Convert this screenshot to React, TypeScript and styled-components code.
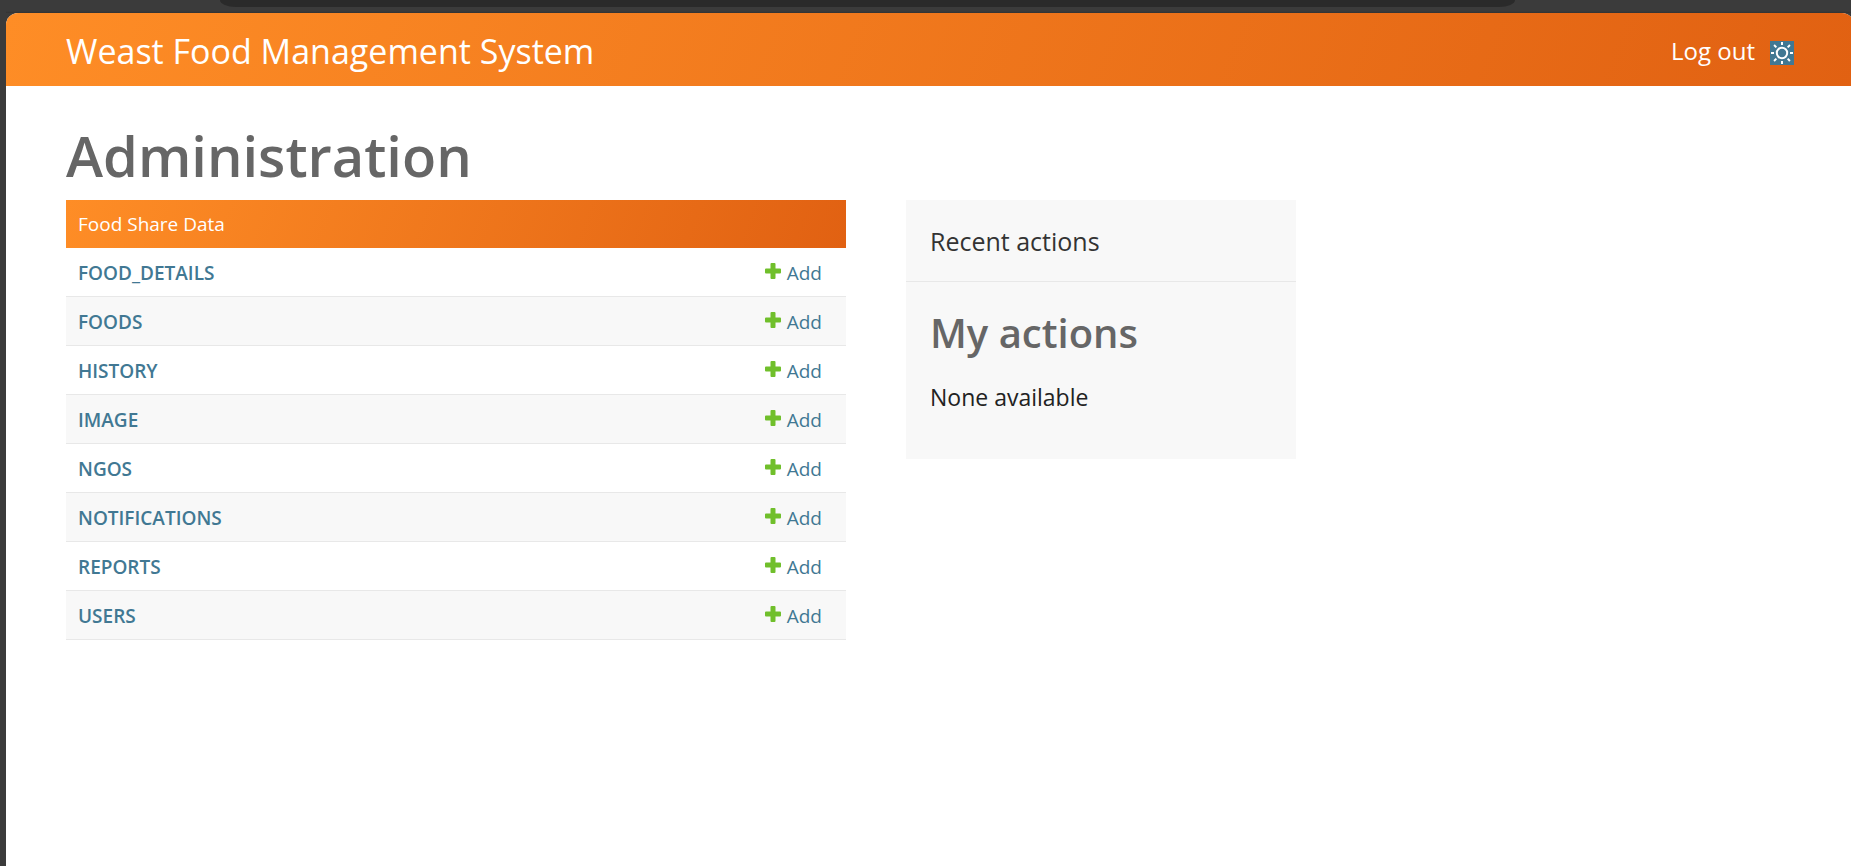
import React from 'react';
import styled, { createGlobalStyle } from 'styled-components';

const GlobalStyle = createGlobalStyle`
  *, *::before, *::after { box-sizing: border-box; }
  body {
    margin: 0;
    background: #3b3b3b;
    color: #222;
    font-family: "Open Sans", "Noto Sans", sans-serif;
    font-size: 24px;
    line-height: 32px;
  }
  a { text-decoration: none; }
`;

const brandGradient = 'linear-gradient(110deg, #fe8d26, #e16112)';

const Window = styled.div`
  display: flex;
  flex-direction: column;
  min-height: 100vh;
  padding-left: 6px;
  overflow: hidden;
  background: #3b3b3b;
`;

const BrowserStrip = styled.div`
  display: flex;
  height: 13px;
  padding: 0 336px 6px 214px;
  background: linear-gradient(#3b3b3b 11px, #323232);
`;

const AddressBar = styled.div`
  flex: 1;
  border-radius: 0 0 16px 16px / 0 0 7px 7px;
  background: #2a2a2a;
`;

const Page = styled.div`
  flex: 1;
  margin-right: -3px;
  border-radius: 12px 12px 0 0;
  overflow: hidden;
  background: #fff;
`;

const Header = styled.header`
  display: flex;
  align-items: center;
  justify-content: space-between;
  height: 73px;
  padding: 3px 60px 0;
  background: ${brandGradient};
  color: #fff;
`;

const SiteName = styled.h1`
  margin: 0;
  font-size: 34px;
  font-weight: 400;
  line-height: 48px;
`;

const UserTools = styled.div`
  display: flex;
  align-items: center;
  gap: 15px;
`;

const LogoutButton = styled.button`
  padding: 0;
  border: 0;
  background: none;
  color: inherit;
  font: inherit;
  cursor: pointer;
`;

const ThemeButton = styled.button`
  display: flex;
  margin-top: 4px;
  padding: 0;
  border: 0;
  background: #417893;
  color: #fff;
  cursor: pointer;
`;

const Main = styled.main`
  padding: 29px 60px 60px;
`;

const PageTitle = styled.h2`
  margin: 0 0 5px;
  color: #666;
  font-size: 56px;
  font-weight: 600;
  line-height: 80px;
`;

const Columns = styled.div`
  display: grid;
  grid-template-columns: 2fr 1fr;
  align-items: start;
  gap: 60px;
  max-width: 1230px;
`;

const ModelTable = styled.table`
  width: 100%;
  border-collapse: separate;
  border-spacing: 0;
  font-size: 19px;
  line-height: 24px;
`;

const Caption = styled.caption`
  padding: 12px;
  background: ${brandGradient};
  color: #fff;
  text-align: left;
`;

const Row = styled.tr`
  background: #fff;
  &:nth-child(even) { background: #f8f8f8; }
`;

const NameCell = styled.th`
  padding: 13px 12px 11px;
  border-bottom: 1px solid #e8e8e8;
  font-weight: 600;
  text-align: left;
`;

const ActionCell = styled.td`
  padding: 13px 24px 11px 12px;
  border-bottom: 1px solid #e8e8e8;
`;

const ModelLink = styled.a`
  color: #417893;
`;

const AddLink = styled.a`
  display: flex;
  align-items: center;
  justify-content: flex-end;
  gap: 6px;
  color: #417893;
`;

const PlusIcon = styled.svg`
  display: block;
  margin-bottom: 5px;
`;

const Sidebar = styled.aside`
  padding-bottom: 46px;
  background: #f8f8f8;
`;

const SidebarTitle = styled.h2`
  margin: 0;
  padding: 25px 24px 23px;
  border-bottom: 1px solid #e8e8e8;
  color: #333;
  font-size: 25px;
  font-weight: 400;
  line-height: 33px;
`;

const SidebarSubtitle = styled.h3`
  margin: 23px 24px 20px;
  color: #666;
  font-size: 40px;
  font-weight: 600;
  line-height: 56px;
`;

const SidebarText = styled.p`
  margin: 0 24px;
  font-size: 23px;
`;

const models = ['FOOD_DETAILS', 'FOODS', 'HISTORY', 'IMAGE', 'NGOS', 'NOTIFICATIONS', 'REPORTS', 'USERS'];

const rays = [0, 45, 90, 135, 180, 225, 270, 315];

function SunIcon() {
  return (
    <svg width="24" height="24" viewBox="0 0 24 24" fill="none" stroke="currentColor" strokeWidth="2" aria-hidden="true">
      <circle cx="12" cy="12" r="5.200" />
      {rays.map((angle) => (
        <path key={angle} d={angle % 90 ? 'M12 .8v3.200' : 'M12 1v3'} transform={`rotate(${angle} 12 12)`} />
      ))}
    </svg>
  );
}

export default function App() {
  return (
    <>
      <GlobalStyle />
      <Window>
        <BrowserStrip>
          <AddressBar />
        </BrowserStrip>
        <Page>
          <Header>
            <SiteName>Weast Food Management System</SiteName>
            <UserTools>
              <LogoutButton type="button">Log out</LogoutButton>
              <ThemeButton type="button" aria-label="Toggle theme">
                <SunIcon />
              </ThemeButton>
            </UserTools>
          </Header>
          <Main>
            <PageTitle>Administration</PageTitle>
            <Columns>
              <ModelTable>
                <Caption>Food Share Data</Caption>
                <tbody>
                  {models.map((name) => (
                    <Row key={name}>
                      <NameCell scope="row">
                        <ModelLink href="#">{name}</ModelLink>
                      </NameCell>
                      <ActionCell>
                        <AddLink href="#">
                          <PlusIcon width="16" height="16" viewBox="0 0 16 16" fill="#70bf2b" aria-hidden="true">
                            <path d="M6.5 0h3a1 1 0 0 1 1 1v4.500h4.500a1 1 0 0 1 1 1v3a1 1 0 0 1-1 1h-4.500v4.500a1 1 0 0 1-1 1h-3a1 1 0 0 1-1-1v-4.500h-4.500a1 1 0 0 1-1-1v-3a1 1 0 0 1 1-1h4.500v-4.500a1 1 0 0 1 1-1z" />
                          </PlusIcon>
                          Add
                        </AddLink>
                      </ActionCell>
                    </Row>
                  ))}
                </tbody>
              </ModelTable>
              <Sidebar>
                <SidebarTitle>Recent actions</SidebarTitle>
                <SidebarSubtitle>My actions</SidebarSubtitle>
                <SidebarText>None available</SidebarText>
              </Sidebar>
            </Columns>
          </Main>
        </Page>
      </Window>
    </>
  );
}
